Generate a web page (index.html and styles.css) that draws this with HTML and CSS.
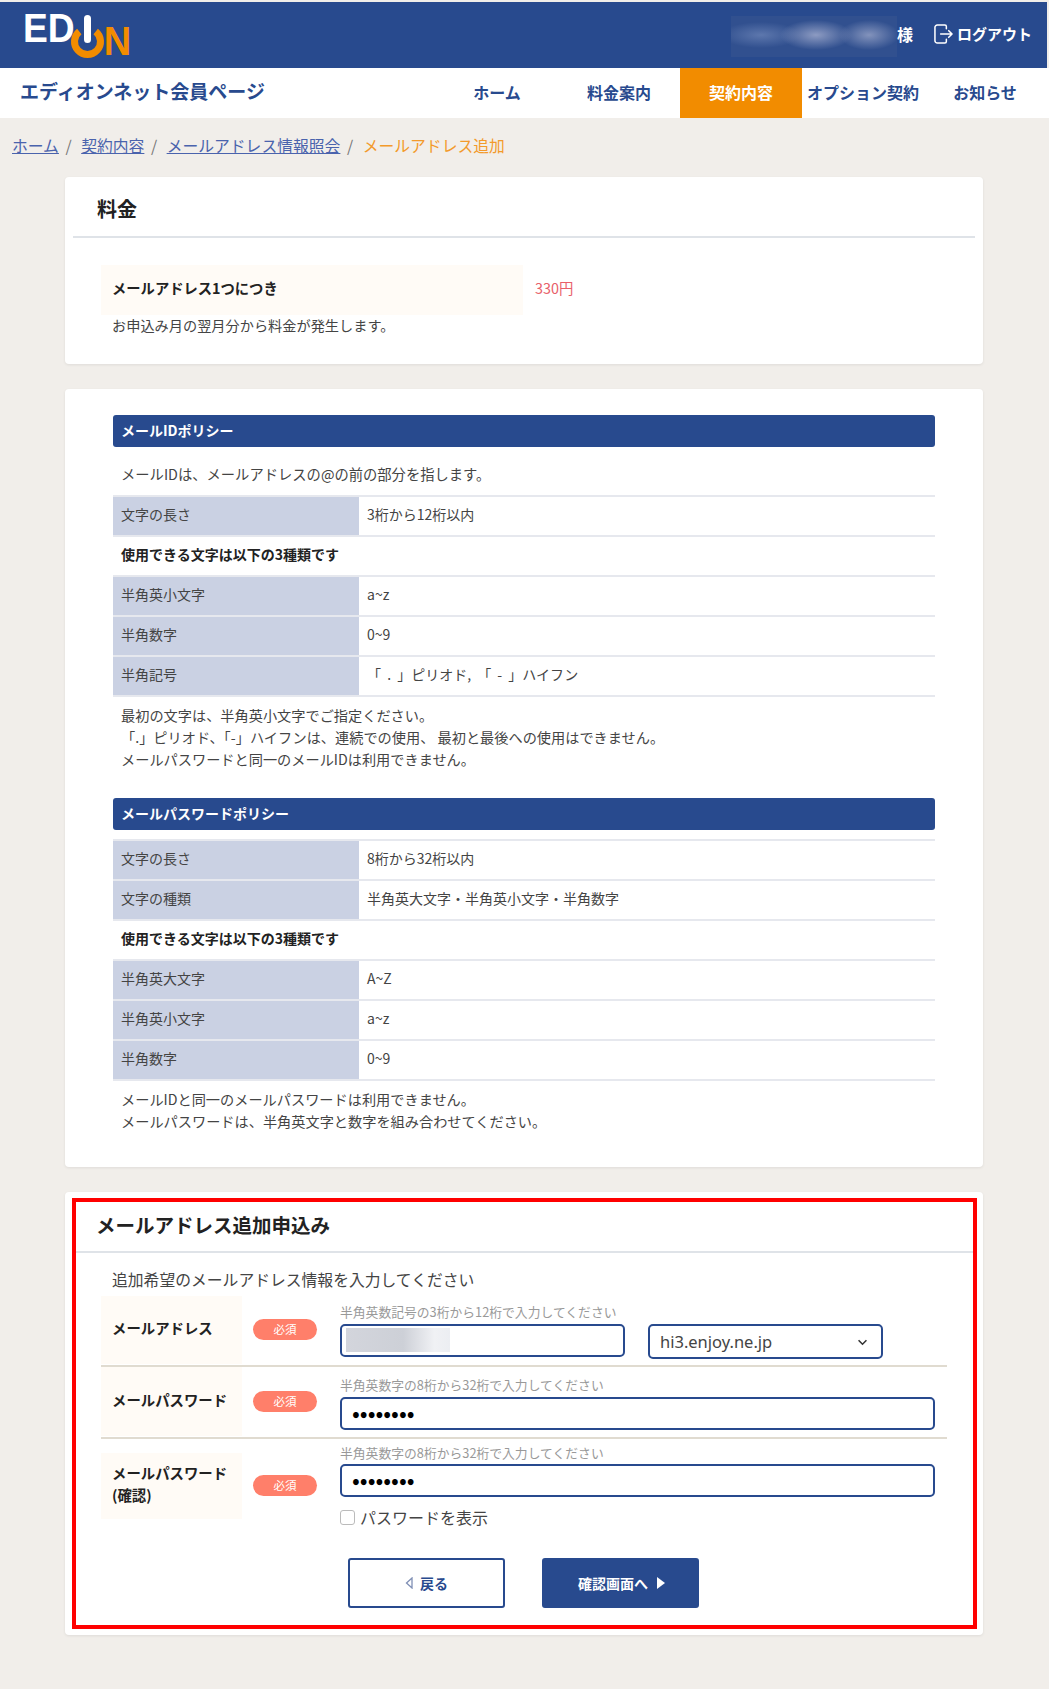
FILE: index.html
```html
<!DOCTYPE html>
<html lang="ja">
<head>
    <meta charset="UTF-8">
    <meta name="viewport" content="width=device-width, initial-scale=1.0">
    <title>メールアドレス追加</title>
    <link rel="stylesheet" href="styles.css">
</head>
<body>
<header class="site-header">
    <a class="logo" href="#" aria-label="EDION">
        <svg width="112" height="60" viewBox="0 -10 112 60">
            <text x="0" y="28" class="logo-white" transform="scale(0.93 1)">ED</text>
            <path d="M56.300 17.500A13 13 0 1 0 72.700 17.500" fill="none" stroke="#f28c00" stroke-width="7"/>
            <rect x="60" y="0" width="9" height="30" rx="4.500" fill="#fff" stroke="#284a8e" stroke-width="2"/>
            <text x="85" y="41" class="logo-orange" transform="scale(0.95 1)">N</text>
        </svg>
    </a>
    <div class="user-area">
        <div class="user-blur"></div>
        <span class="user-suffix">様</span>
        <a class="logout" href="#">
            <svg width="19" height="20" viewBox="0 0 20 21" fill="none" stroke="#fff" stroke-width="1.600" stroke-linecap="round" stroke-linejoin="round">
                <path d="M13 5V2.500a1.500 1.500 0 0 0-1.500-1.500h-8A2.500 2.500 0 0 0 1 3.500v14A2.500 2.500 0 0 0 3.500 20h8a1.500 1.500 0 0 0 1.500-1.500V16"/>
                <path d="M7 10.500h12M15.500 7l3.500 3.500-3.500 3.500"/>
            </svg>
            ログアウト
        </a>
    </div>
</header>

<nav class="site-nav">
    <div class="site-title">エディオンネット会員ページ</div>
    <ul class="nav-list">
        <li><a href="#">ホーム</a></li>
        <li><a href="#">料金案内</a></li>
        <li><a href="#" class="active">契約内容</a></li>
        <li><a href="#">オプション契約</a></li>
        <li><a href="#">お知らせ</a></li>
    </ul>
</nav>

<div class="breadcrumb">
    <a href="#">ホーム</a><span class="sep">/</span>
    <a href="#">契約内容</a><span class="sep">/</span>
    <a href="#">メールアドレス情報照会</a><span class="sep">/</span>
    <span class="current">メールアドレス追加</span>
</div>

<main class="container">
    <section class="card card-price">
        <h2 class="card-title">料金</h2>
        <div class="price-row">
            <div class="price-label">メールアドレス1つにつき</div>
            <div class="price-value">330円</div>
        </div>
        <p class="price-note">お申込み月の翌月分から料金が発生します。</p>
    </section>

    <section class="card card-policy">
        <h3 class="policy-bar">メールIDポリシー</h3>
        <p class="policy-lead">メールIDは、メールアドレスの@の前の部分を指します。</p>
        <table class="policy-table">
            <tr><th>文字の長さ</th><td>3桁から12桁以内</td></tr>
            <tr><td colspan="2" class="policy-sub">使用できる文字は以下の3種類です</td></tr>
            <tr><th>半角英小文字</th><td>a~z</td></tr>
            <tr><th>半角数字</th><td>0~9</td></tr>
            <tr><th>半角記号</th><td class="policy-symbols">「 . 」ピリオド, 「 - 」ハイフン</td></tr>
        </table>
        <p class="policy-note">最初の文字は、半角英小文字でご指定ください。<br>「.」ピリオド、「-」ハイフンは、連続での使用、 最初と最後への使用はできません。<br>メールパスワードと同一のメールIDは利用できません。</p>

        <h3 class="policy-bar policy-bar-second">メールパスワードポリシー</h3>
        <table class="policy-table">
            <tr><th>文字の長さ</th><td>8桁から32桁以内</td></tr>
            <tr><th>文字の種類</th><td>半角英大文字・半角英小文字・半角数字</td></tr>
            <tr><td colspan="2" class="policy-sub">使用できる文字は以下の3種類です</td></tr>
            <tr><th>半角英大文字</th><td>A~Z</td></tr>
            <tr><th>半角英小文字</th><td>a~z</td></tr>
            <tr><th>半角数字</th><td>0~9</td></tr>
        </table>
        <p class="policy-note">メールIDと同一のメールパスワードは利用できません。<br>メールパスワードは、半角英文字と数字を組み合わせてください。</p>
    </section>

    <section class="card card-form">
        <form class="form-frame" action="#" method="get">
            <h2 class="card-title form-title">メールアドレス追加申込み</h2>
            <p class="form-intro">追加希望のメールアドレス情報を入力してください</p>

            <div class="form-row form-row-first">
                <label class="form-label" for="mail_id">メールアドレス</label>
                <div class="badge-col"><span class="badge">必須</span></div>
                <div class="form-field">
                    <div class="hint">半角英数記号の3桁から12桁で入力してください</div>
                    <div class="address-inputs">
                        <div class="mail-id-wrap">
                            <input class="text-input" type="text" id="mail_id">
                            <div class="input-blur"></div>
                        </div>
                        <div class="select-wrap">
                            <select class="domain-select">
                                <option>hi3.enjoy.ne.jp</option>
                            </select>
                            <svg class="select-arrow" width="11" height="7" viewBox="0 0 12 8" fill="none" stroke="#333" stroke-width="1.800"><path d="M1.500 1.500 6 6l4.500-4.500"/></svg>
                        </div>
                    </div>
                </div>
            </div>

            <div class="form-row form-row-second">
                <label class="form-label" for="mail_pass">メールパスワード</label>
                <div class="badge-col"><span class="badge">必須</span></div>
                <div class="form-field">
                    <div class="hint">半角英数字の8桁から32桁で入力してください</div>
                    <input class="text-input" type="password" id="mail_pass" value="password">
                </div>
            </div>

            <div class="form-row form-row-last">
                <label class="form-label" for="mail_pass2">メールパスワード<br>(確認)</label>
                <div class="badge-col"><span class="badge">必須</span></div>
                <div class="form-field">
                    <div class="hint">半角英数字の8桁から32桁で入力してください</div>
                    <input class="text-input" type="password" id="mail_pass2" value="password">
                    <label class="show-pass"><input type="checkbox">パスワードを表示</label>
                </div>
            </div>

            <div class="form-buttons">
                <button type="button" class="btn btn-back">
                    <svg width="8" height="12" viewBox="0 0 8 12" fill="none" stroke="#7f8fb5" stroke-width="1.300"><path d="M7 1 1.500 6 7 11z"/></svg>
                    戻る
                </button>
                <button type="submit" class="btn btn-next">
                    確認画面へ
                    <svg width="8" height="12" viewBox="0 0 8 12" fill="#fff"><path d="M0 0l8 6-8 6z"/></svg>
                </button>
            </div>
        </form>
    </section>
</main>
</body>
</html>
```

FILE: styles.css
```css
* {
    box-sizing: border-box;
}

body {
    margin: 0;
    background: #f1eeea;
    color: #444;
    font-family: "Noto Sans CJK JP", "Noto Sans", sans-serif;
    font-size: 14px;
}

a {
    color: inherit;
    text-decoration: none;
}

/* header */
.site-header {
    display: flex;
    justify-content: space-between;
    height: 66px;
    margin-top: 2px;
    margin-right: 2px;
    background: #284a8e;
    color: #fff;
}

.logo {
    display: block;
    margin: 2px 0 0 23px;
}

.logo-white,
.logo-orange {
    font-family: "Liberation Sans", sans-serif;
    font-size: 40px;
    font-weight: bold;
}

.logo-white {
    fill: #fff;
}

.logo-orange {
    fill: #f28c00;
}

.user-area {
    display: flex;
    align-items: flex-start;
    padding: 14px 15px 0 0;
    font-size: 16px;
    font-weight: bold;
    line-height: 36px;
}

.user-blur {
    width: 166px;
    height: 41px;
    background:
        radial-gradient(ellipse 36px 15px at 85px 19px, #8d9bc2, transparent),
        radial-gradient(ellipse 30px 15px at 138px 19px, #8393bc, transparent),
        radial-gradient(ellipse 40px 13px at 30px 19px, #5d77ad, transparent),
        #31508f;
}

.user-suffix {
    margin-right: 21px;
}

.logout {
    display: flex;
    align-items: center;
    gap: 4px;
    height: 36px;
    font-size: 15px;
}

.site-nav {
    display: flex;
    justify-content: space-between;
    height: 50px;
    background: #fff;
    color: #284a8e;
}

.site-title {
    margin-left: 20px;
    font-size: 19px;
    font-weight: bold;
    line-height: 46px;
}

.nav-list {
    display: flex;
    margin: 0 3px 0 0;
    padding: 0;
    list-style: none;
}

.nav-list a {
    display: block;
    width: 122px;
    height: 50px;
    font-size: 16px;
    font-weight: bold;
    line-height: 48px;
    text-align: center;
}

.nav-list a.active {
    background: #f28c00;
    color: #fff;
}

.breadcrumb {
    height: 59px;
    padding: 17px 0 0 12px;
    color: #777;
    font-size: 15.800px;
    line-height: 22px;
}

.breadcrumb a {
    color: #4a63ad;
    text-decoration: underline;
}

.breadcrumb .sep {
    margin: 0 6px 0 6.500px;
}

.breadcrumb .current {
    color: #f39a2b;
}

/* cards */
.container {
    display: flex;
    flex-direction: column;
    gap: 25px;
    width: 918px;
    margin-left: 65px;
    padding-bottom: 56px;
}

.card {
    background: #fff;
    border-radius: 4px;
    box-shadow: 0 1px 3px rgba(0, 0, 0, 0.08);
}

.card-title {
    height: 61px;
    margin: 0 8px;
    padding: 3px 0 0 24px;
    border-bottom: 2px solid #dfe3e8;
    color: #222;
    font-size: 20px;
    font-weight: bold;
    line-height: 58px;
}

.card-price {
    height: 187px;
}

.price-row {
    display: flex;
    align-items: center;
    margin: 27px 0 0 36px;
}

.price-label {
    width: 422px;
    height: 50px;
    padding-left: 11px;
    background: #fffbf6;
    color: #222;
    font-size: 14.300px;
    font-weight: bold;
    line-height: 46px;
}

.price-value {
    margin: 0 0 6px 12px;
    color: #e8606a;
    font-size: 14.400px;
}

.price-note {
    margin: 0 0 0 47px;
    font-size: 14.200px;
    line-height: 20px;
}

.card-policy {
    height: 778px;
    padding: 26px 48px 0;
}

.policy-bar {
    height: 32px;
    margin: 0;
    padding-left: 8px;
    background: #284a8e;
    border-radius: 3px;
    color: #fff;
    font-size: 14px;
    font-weight: bold;
    line-height: 30px;
}

.policy-bar-second {
    margin-top: 28px;
    margin-bottom: 9px;
}

.policy-lead {
    margin: 16px 0 10px;
    padding-left: 8px;
    font-size: 14.300px;
    line-height: 22px;
}

.policy-table {
    width: 100%;
    border-collapse: collapse;
    border-top: 2px solid #e6e8ee;
    font-size: 14px;
}

.policy-table tr {
    height: 40px;
    border-bottom: 2px solid #e6e8ee;
}

.policy-table th,
.policy-table td {
    padding: 0 8px 4px;
    text-align: left;
    font-weight: normal;
}

.policy-table th {
    width: 246px;
    background: #cad1e3;
}

.policy-table .policy-sub {
    color: #222;
    font-weight: bold;
}

.policy-table .policy-symbols {
    word-spacing: 3px;
}

.policy-note {
    margin: 7px 0 0;
    padding-left: 8px;
    font-size: 14.200px;
    line-height: 22px;
}

/* application form */
.card-form {
    padding: 6px 6px 6px 7px;
}

.form-frame {
    height: 431px;
    border: 4px solid #f00;
}

.form-title {
    height: 51px;
    margin: 0;
    padding: 0 0 0 20px;
    font-size: 19.500px;
    line-height: 46px;
}

.form-intro {
    margin: 15px 0 4px 36px;
    color: #444;
    font-size: 15.800px;
    line-height: 24px;
}

.form-row {
    display: flex;
    align-items: flex-start;
    margin: 0 26px 0 25px;
    border-bottom: 2px solid #e0dbd0;
}

.form-row-first {
    height: 71px;
}

.form-row-second {
    height: 72px;
}

.form-row-last {
    border-bottom: 0;
}

.form-label {
    display: flex;
    align-items: center;
    width: 141px;
    height: 68px;
    padding: 0 0 4px 11px;
    background: #fffbf6;
    color: #222;
    font-size: 14.400px;
    font-weight: bold;
    line-height: 22px;
}

.form-row-second .form-label {
    height: 69px;
}

.form-row-last .form-label {
    height: 66px;
    margin-top: 14px;
}

.badge-col {
    display: flex;
    align-items: center;
    width: 98px;
    height: 66px;
    padding-left: 11px;
}

.form-row-second .badge-col {
    height: 68px;
}

.form-row-last .badge-col {
    height: 64px;
    margin-top: 14px;
}

.badge {
    width: 64px;
    height: 21px;
    background: #ff7f6a;
    border-radius: 11px;
    color: #fff;
    font-size: 11.500px;
    line-height: 20px;
    text-align: center;
}

.form-field {
    flex: 1;
    padding: 7px 12px 0 0;
}

.form-row-second .form-field {
    padding-top: 9px;
}

.form-row-last .form-field {
    padding-top: 5px;
}

.hint {
    margin-bottom: 3px;
    color: #999;
    font-size: 12.800px;
    line-height: 18px;
}

.form-row-last .hint {
    margin-bottom: 2px;
}

.text-input {
    display: block;
    width: 100%;
    height: 33px;
    padding: 0 10px;
    background: #fff;
    border: 2px solid #284a8e;
    border-radius: 5px;
    color: #000;
    font-family: inherit;
    font-size: 16px;
}

.text-input[type="password"] {
    padding-bottom: 3px;
    font-size: 23px;
}

.address-inputs {
    display: flex;
    gap: 23px;
}

.mail-id-wrap {
    position: relative;
    width: 285px;
}

.input-blur {
    position: absolute;
    top: 4px;
    left: 6px;
    width: 104px;
    height: 24px;
    background: linear-gradient(90deg, #d3d5dc 0, #cdd0d7 55%, #f0f1f4 85%, #eceef2 100%);
}

.select-wrap {
    position: relative;
    width: 235px;
}

.domain-select {
    display: block;
    width: 100%;
    height: 35px;
    padding: 0 10px;
    appearance: none;
    background: #fff;
    border: 2px solid #284a8e;
    border-radius: 5px;
    color: #444;
    font-family: "Noto Sans", sans-serif;
    font-size: 16.500px;
}

.select-arrow {
    position: absolute;
    top: 15px;
    right: 15px;
}

.show-pass {
    display: flex;
    align-items: center;
    gap: 5px;
    margin-top: 8px;
    font-size: 16px;
    line-height: 24px;
}

.show-pass input {
    width: 15px;
    height: 15px;
    margin: 0;
    appearance: none;
    background: #fff;
    border: 1px solid #bbb;
    border-radius: 3px;
}

.form-buttons {
    display: flex;
    justify-content: center;
    gap: 37px;
    margin-top: 29px;
    padding-right: 2px;
}

.btn {
    display: flex;
    align-items: center;
    justify-content: center;
    gap: 7px;
    width: 157px;
    height: 50px;
    border-radius: 3px;
    font-family: inherit;
    font-size: 14px;
    font-weight: bold;
}

.btn-back {
    background: #fff;
    border: 2px solid #284a8e;
    color: #284a8e;
}

.btn-next {
    gap: 9px;
    padding-right: 4px;
    background: #284a8e;
    border: 2px solid #284a8e;
    color: #fff;
}
```
